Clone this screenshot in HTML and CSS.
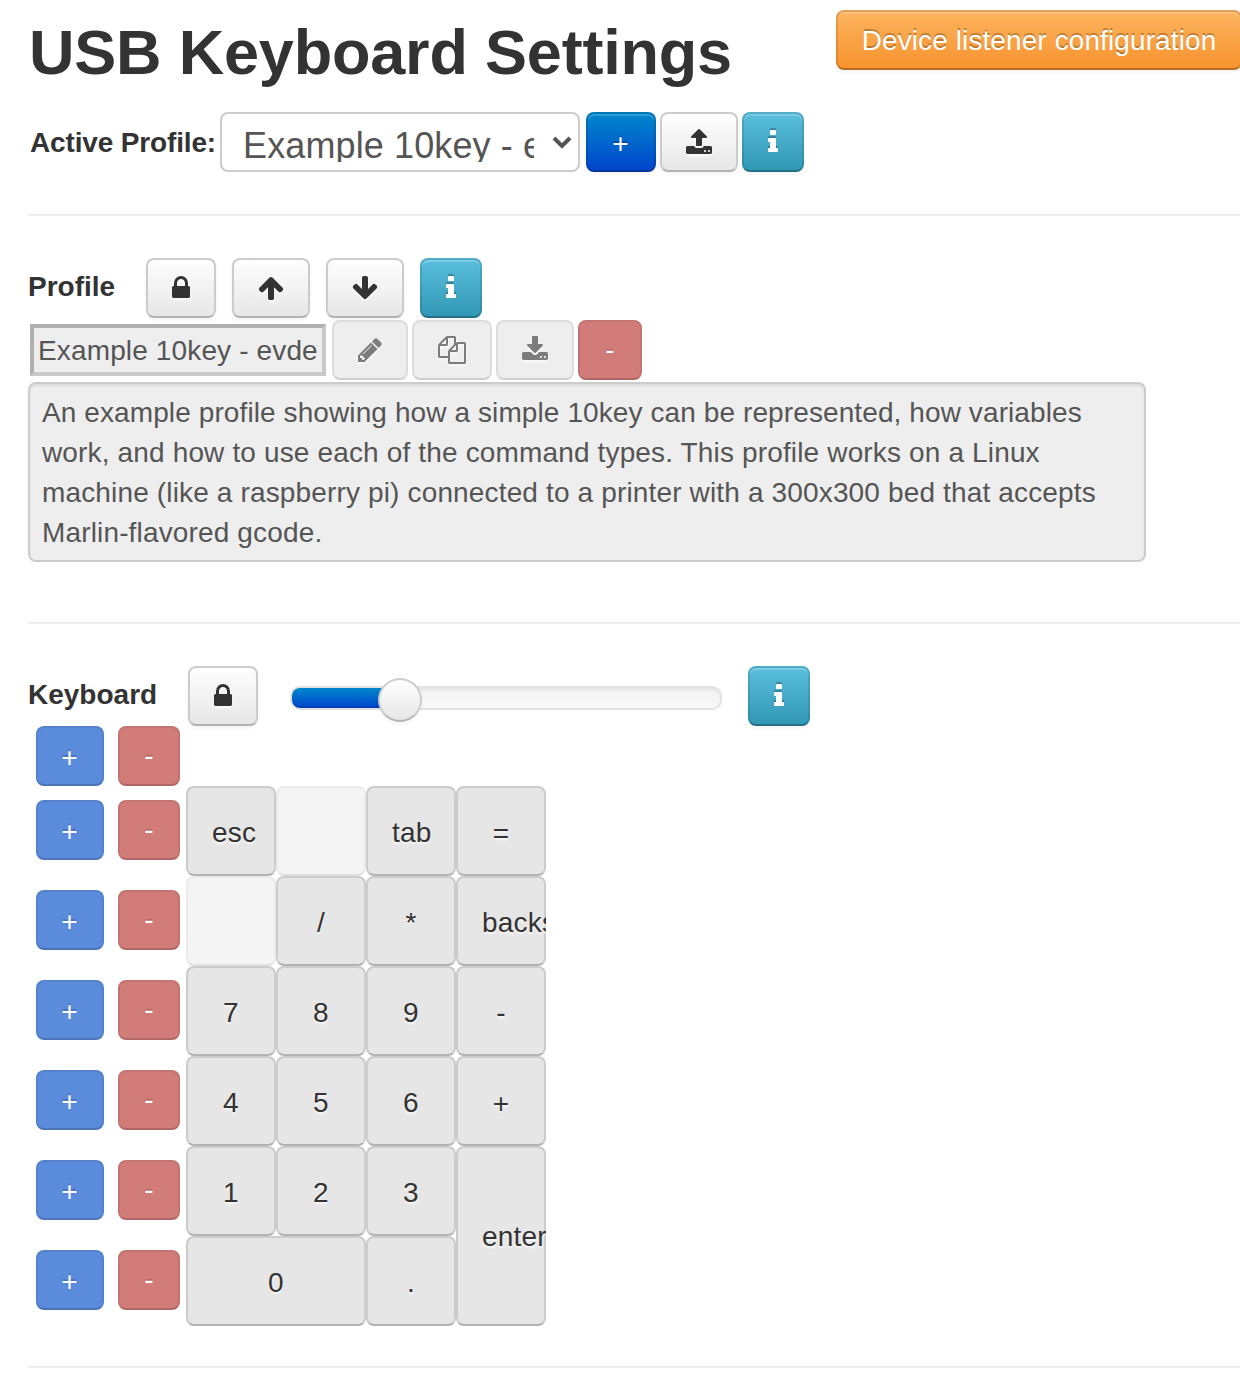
FILE: index.html
```html
<!DOCTYPE html>
<html lang="en">
<head>
<meta charset="utf-8">
<title>USB Keyboard Settings</title>
<link rel="stylesheet" href="styles.css">
</head>
<body>
<svg class="sprite" aria-hidden="true">
  <symbol id="upload" viewBox="0 0 1792 1792"><path d="M1344 1472q0-26-19-45t-45-19-45 19-19 45 19 45 45 19 45-19 19-45zm256 0q0-26-19-45t-45-19-45 19-19 45 19 45 45 19 45-19 19-45zm128-224v320q0 40-28 68t-68 28h-1472q-40 0-68-28t-28-68v-320q0-40 28-68t68-28h427q21 56 70.5 92t110.5 36h256q61 0 110.5-36t70.5-92h427q40 0 68 28t28 68zm-325-648q-17 40-59 40h-256v448q0 26-19 45t-45 19h-256q-26 0-45-19t-19-45v-448h-256q-42 0-59-40-17-39 14-69l448-448q18-19 45-19t45 19l448 448q31 30 14 69z"/></symbol>
  <symbol id="download" viewBox="0 0 1792 1792"><path d="M1344 1344q0-26-19-45t-45-19-45 19-19 45 19 45 45 19 45-19 19-45zm256 0q0-26-19-45t-45-19-45 19-19 45 19 45 45 19 45-19 19-45zm128-224v320q0 40-28 68t-68 28h-1472q-40 0-68-28t-28-68v-320q0-40 28-68t68-28h465l135 136q58 56 136 56t136-56l136-136h464q40 0 68 28t28 68zm-325-569q17 41-14 70l-448 448q-18 19-45 19t-45-19l-448-448q-31-29-14-70 17-39 59-39h256v-448q0-26 19-45t45-19h256q26 0 45 19t19 45v448h256q42 0 59 39z"/></symbol>
  <symbol id="lock" viewBox="0 0 1792 1792"><path d="M640 768h512v-192q0-106-75-181t-181-75-181 75-75 181v192zm832 96v576q0 40-28 68t-68 28h-960q-40 0-68-28t-28-68v-576q0-40 28-68t68-28h32v-192q0-184 132-316t316-132 316 132 132 316v192h32q40 0 68 28t28 68z"/></symbol>
  <symbol id="up" viewBox="0 0 1792 1792"><path d="M1675 971q0 51-37 90l-75 75q-38 38-91 38-54 0-90-38l-294-293v704q0 52-37.5 84.5t-90.5 32.5h-128q-53 0-90.5-32.5t-37.5-84.5v-704l-294 293q-36 38-90 38t-90-38l-75-75q-38-38-38-90 0-53 38-91l651-651q35-37 90-37 54 0 91 37l651 651q37 39 37 91z"/></symbol>
  <symbol id="down" viewBox="0 0 1792 1792"><path d="M1675 832q0 53-37 90l-651 652q-39 37-91 37-53 0-90-37l-651-652q-38-36-38-90 0-53 38-91l74-75q39-37 91-37 53 0 90 37l294 294v-704q0-52 38-90t90-38h128q52 0 90 38t38 90v704l294-294q37-37 90-37 52 0 91 37l75 75q37 39 37 91z"/></symbol>
  <symbol id="info" viewBox="0 0 1792 1792"><path d="M1216 1344v128q0 26-19 45t-45 19h-512q-26 0-45-19t-19-45v-128q0-26 19-45t45-19h64v-384h-64q-26 0-45-19t-19-45v-128q0-26 19-45t45-19h384q26 0 45 19t19 45v576h64q26 0 45 19t19 45zm-128-1152v192q0 26-19 45t-45 19h-256q-26 0-45-19t-19-45v-192q0-26 19-45t45-19h256q26 0 45 19t19 45z"/></symbol>
  <symbol id="pencil" viewBox="0 0 1792 1792"><path d="M491 1536l91-91-235-235-91 91v107h128v128h107zm523-928q0-22-22-22-10 0-17 7l-542 542q-7 7-7 17 0 22 22 22 10 0 17-7l542-542q7-7 7-17zm-54-192l416 416-832 832h-416v-416zm683 96q0 53-37 90l-166 166-416-416 166-165q36-38 90-38 53 0 91 38l235 234q37 39 37 91z"/></symbol>
  <symbol id="copy" viewBox="0 0 1792 1792"><path d="M1696 384q40 0 68 28t28 68v1216q0 40-28 68t-68 28h-960q-40 0-68-28t-28-68v-288h-544q-40 0-68-28t-28-68v-672q0-40 20-88t48-76l408-408q28-28 76-48t88-20h416q40 0 68 28t28 68v328q68-40 128-40h416zm-544 213l-299 299h299v-299zm-640-384l-299 299h299v-299zm196 647l316-316v-416h-384v416q0 40-28 68t-68 28h-416v640h512v-256q0-40 20-88t48-76zm956 804v-1152h-384v416q0 40-28 68t-68 28h-416v640h896z"/></symbol>
</svg>

<main class="page">
  <header class="header">
    <h1 class="title">USB Keyboard Settings</h1>
    <button class="btn warning listener">Device listener configuration</button>
  </header>

  <section class="active">
    <label class="label active-label">Active Profile:</label>
    <div class="select">
      <span class="select-text">Example 10key - ev</span>
      <svg class="chevron" viewBox="0 0 20 14"><path d="M2 3l8 8 8-8"/></svg>
    </div>
    <button class="btn sign primary w70">+</button>
    <button class="btn w78"><svg class="icon"><use href="#upload"/></svg></button>
    <button class="btn info w62"><svg class="icon"><use href="#info"/></svg></button>
  </section>

  <section class="profile">
    <div class="profile-head">
      <h4 class="label profile-label">Profile</h4>
      <button class="btn w70"><svg class="icon"><use href="#lock"/></svg></button>
      <button class="btn w78"><svg class="icon"><use href="#up"/></svg></button>
      <button class="btn w78"><svg class="icon"><use href="#down"/></svg></button>
      <button class="btn info w62"><svg class="icon"><use href="#info"/></svg></button>
    </div>
    <div class="profile-edit">
      <div class="name"><span class="name-text">Example 10key - evdev</span></div>
      <button class="btn off w76"><svg class="icon"><use href="#pencil"/></svg></button>
      <button class="btn off w80"><svg class="icon"><use href="#copy"/></svg></button>
      <button class="btn off w78"><svg class="icon"><use href="#download"/></svg></button>
      <button class="btn danger-off w64">-</button>
    </div>
    <div class="description">An example profile showing how a simple 10key can be represented, how variables<br>work, and how to use each of the command types. This profile works on a Linux<br>machine (like a raspberry pi) connected to a printer with a 300x300 bed that accepts<br>Marlin-flavored gcode.</div>
  </section>

  <section class="keyboard">
    <div class="keyboard-head">
      <h4 class="label keyboard-label">Keyboard</h4>
      <button class="btn w70"><svg class="icon"><use href="#lock"/></svg></button>
      <div class="slider"><div class="slider-fill"></div><div class="slider-handle"></div></div>
      <button class="btn info w62"><svg class="icon"><use href="#info"/></svg></button>
    </div>
    <div class="board">
      <div class="controls">
        <div class="control first"><button class="btn sign primary-off">+</button><button class="btn danger-off">-</button></div>
        <div class="control"><button class="btn sign primary-off">+</button><button class="btn danger-off">-</button></div>
        <div class="control"><button class="btn sign primary-off">+</button><button class="btn danger-off">-</button></div>
        <div class="control"><button class="btn sign primary-off">+</button><button class="btn danger-off">-</button></div>
        <div class="control"><button class="btn sign primary-off">+</button><button class="btn danger-off">-</button></div>
        <div class="control"><button class="btn sign primary-off">+</button><button class="btn danger-off">-</button></div>
        <div class="control"><button class="btn sign primary-off">+</button><button class="btn danger-off">-</button></div>
      </div>
      <div class="keys">
        <div class="cell"><div class="key">esc</div></div>
        <div class="cell"><div class="key blank"></div></div>
        <div class="cell"><div class="key">tab</div></div>
        <div class="cell"><div class="key sign">=</div></div>
        <div class="cell"><div class="key blank"></div></div>
        <div class="cell"><div class="key">/</div></div>
        <div class="cell"><div class="key">*</div></div>
        <div class="cell"><div class="key">backspace</div></div>
        <div class="cell"><div class="key">7</div></div>
        <div class="cell"><div class="key">8</div></div>
        <div class="cell"><div class="key">9</div></div>
        <div class="cell"><div class="key">-</div></div>
        <div class="cell"><div class="key">4</div></div>
        <div class="cell"><div class="key">5</div></div>
        <div class="cell"><div class="key">6</div></div>
        <div class="cell"><div class="key sign">+</div></div>
        <div class="cell"><div class="key">1</div></div>
        <div class="cell"><div class="key">2</div></div>
        <div class="cell"><div class="key">3</div></div>
        <div class="cell tall"><div class="key">enter</div></div>
        <div class="cell wide"><div class="key">0</div></div>
        <div class="cell"><div class="key">.</div></div>
      </div>
    </div>
  </section>
</main>
</body>
</html>
```
FILE: styles.css
```css
* { box-sizing: border-box; }
html { overflow: hidden; }
body {
  margin: 0;
  height: 1390px;
  overflow: hidden;
  background: #fff;
  color: #333;
  font: 28px/40px "Liberation Sans", Arial, sans-serif;
}
.sprite { display: none; }
.page { width: 1214px; margin-left: 28px; }
section { border-bottom: 2px solid #eee; }

.header { display: flex; justify-content: space-between; height: 112px; padding-top: 10px; }
.title { margin: 0 0 0 1px; font-size: 63px; line-height: 80px; letter-spacing: -0.2px; white-space: nowrap; padding-top: 2px; }
.label { margin: 0; font-size: 28px; font-weight: bold; line-height: 60px; white-space: nowrap; }

.btn {
  flex: none;
  display: flex;
  align-items: center;
  justify-content: center;
  height: 60px;
  margin: 0;
  padding: 0;
  border: 2px solid #ccc;
  border-bottom-color: #b3b3b3;
  border-radius: 8px;
  background: linear-gradient(#fff, #e6e6e6) border-box;
  box-shadow: inset 0 2px 0 rgba(255,255,255,.2), 0 2px 4px rgba(0,0,0,.05);
  color: #333;
  font: 28px/40px "Liberation Sans", Arial, sans-serif;
  text-shadow: 0 2px 2px rgba(255,255,255,.75);
}
.btn.listener { width: 406px; padding-top: 2px; letter-spacing: 0.1px; }
.btn.sign { padding: 3px 1px 0 0; }
.w62 { width: 62px; }
.w64 { width: 64px; }
.w70 { width: 70px; }
.w76 { width: 76px; }
.w78 { width: 78px; }
.w80 { width: 80px; }
.warning, .primary, .info, .primary-off, .danger-off {
  border-color: rgba(0,0,0,.1) rgba(0,0,0,.1) rgba(0,0,0,.25);
  color: #fff;
  text-shadow: 0 -2px 0 rgba(0,0,0,.25);
}
.warning { background-image: linear-gradient(#fcb45f, #f7922d); }
.primary { background-image: linear-gradient(#08c, #04c); }
.info { background-image: linear-gradient(#5bc0de, #2f96b4); }
.off { background: #eee; border-color: #ddd; border-bottom-color: #d0d0d0; color: #7c7c7c; box-shadow: none; }
.primary-off { background: #5a8cdb; box-shadow: none; text-shadow: 0 -2px 0 rgba(0,0,0,.16); }
.danger-off { background: #d27c7a; box-shadow: none; text-shadow: 0 -2px 0 rgba(0,0,0,.16); }
.primary-off, .danger-off { border-color: rgba(0,0,0,.07) rgba(0,0,0,.07) rgba(0,0,0,.16); }
.icon { display: block; width: 28px; height: 28px; fill: currentColor; filter: drop-shadow(0 2px 1px rgba(255,255,255,.75)); }
.info .icon { filter: drop-shadow(0 -2px 0 rgba(0,0,0,.25)); }

.active { display: flex; height: 104px; }
.active-label { width: 192px; padding-left: 2px; line-height: 61px; letter-spacing: -0.15px; }
.select {
  display: flex;
  align-items: center;
  justify-content: space-between;
  width: 360px;
  height: 60px;
  margin-right: 6px;
  padding: 0 6px 0 21px;
  border: 2px solid #ccc;
  border-radius: 8px;
  color: #555;
}
.select-text { width: 291px; height: 40px; overflow: hidden; font-size: 36px; line-height: 48px; letter-spacing: 0.12px; white-space: nowrap; }
.chevron { width: 20px; height: 14px; fill: none; stroke: #555; stroke-width: 4; }
.active .btn + .btn { margin-left: 4px; }

.profile { height: 408px; padding-top: 42px; }
.profile-head { display: flex; gap: 16px; height: 62px; }
.profile-label { width: 102px; line-height: 58px; }
.profile-edit { display: flex; gap: 4px; height: 62px; }
.name {
  width: 296px;
  height: 52px;
  margin: 4px 2px 0;
  padding: 3px 4px 0;
  border: 4px solid;
  border-color: #b0b0b0 #c9c9c9 #c9c9c9 #b0b0b0;
  background: #eee;
  color: #555;
}
.name-text { display: block; overflow: hidden; letter-spacing: 0.14px; white-space: nowrap; }
.description {
  width: 1118px;
  height: 180px;
  padding: 9px 12px 7px;
  border: 2px solid #ccc;
  border-radius: 8px;
  background: #eee;
  box-shadow: inset 0 2px 2px rgba(0,0,0,.075);
  color: #555;
  letter-spacing: 0.15px;
  white-space: nowrap;
}
.description::first-line { letter-spacing: 0.1px; }

.keyboard { height: 744px; padding-top: 42px; }
.keyboard-head { display: flex; height: 60px; }
.keyboard-label { width: 160px; line-height: 58px; }
.slider {
  position: relative;
  width: 432px;
  height: 24px;
  margin: 20px 26px 0 32px;
  border: 2px solid #e2e2e2;
  border-radius: 10px;
  background: linear-gradient(#f3f3f3, #f8f8f8);
  box-shadow: inset 0 2px 3px rgba(0,0,0,.07);
}
.slider-fill { width: 108px; height: 20px; border-radius: 8px 0 0 8px; background: linear-gradient(#08c, #04c); box-shadow: inset 0 -2px 0 rgba(0,0,0,.1); }
.slider-handle {
  position: absolute;
  left: 86px;
  top: -10px;
  width: 44px;
  height: 44px;
  border: 2px solid #ccc;
  border-bottom-color: #b3b3b3;
  border-radius: 50%;
  background: linear-gradient(#fff, #e6e6e6);
  box-shadow: 0 2px 4px rgba(0,0,0,.05);
}

.board { display: flex; }
.controls { width: 158px; padding-left: 8px; }
.control { display: flex; gap: 14px; height: 90px; }
.control.first { height: 74px; }
.primary-off { width: 68px; }
.control .danger-off { width: 62px; }
.keys { display: grid; grid-template-columns: repeat(4, 90px); grid-auto-rows: 90px; padding-top: 60px; }
.cell { overflow: hidden; }
.tall { grid-row: span 2; }
.wide { grid-column: span 2; }
.key {
  display: flex;
  align-items: center;
  justify-content: safe center;
  height: 100%;
  padding: 3px 24px 0;
  border: 2px solid #ccc;
  border-bottom-color: #b3b3b3;
  border-radius: 8px;
  background: #e6e6e6;
  text-shadow: 0 2px 2px rgba(255,255,255,.75);
  letter-spacing: 0.2px;
  white-space: nowrap;
}
.key.sign { padding-top: 6px; }
.tall .key { padding-top: 1px; }
.blank { opacity: .4; }
```
